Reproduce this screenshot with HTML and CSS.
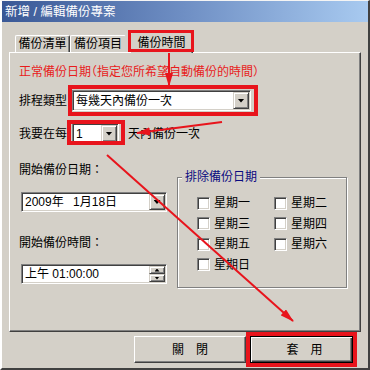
FILE: index.html
```html
<!DOCTYPE html>
<html lang="zh-Hant">
<head>
    <meta charset="UTF-8">
    <meta name="viewport" content="width=device-width, initial-scale=1.0">
    <title>新增 / 編輯備份專案</title>
    <link rel="stylesheet" href="styles.css">
</head>
<body>
    <div class="window">
        <div class="titlebar">新增 / 編輯備份專案</div>

        <div class="content">
            <div class="tabs">
                <div class="tab tab-list">備份清單</div>
                <div class="tab tab-items">備份項目</div>
                <div class="tab tab-active mark">備份時間</div>
            </div>

            <div class="panel">
                <p class="heading">正常備份日期（指定您所希望自動備份的時間）</p>

                <div class="row row-type">
                    <span class="label">排程類型</span>
                    <div class="field combo combo-type mark">
                        <span class="field-text">每幾天內備份一次</span>
                        <span class="drop"></span>
                    </div>
                </div>

                <div class="row row-every">
                    <span class="label">我要在每</span>
                    <div class="field combo combo-days mark">
                        <span class="field-text">1</span>
                        <span class="drop"></span>
                    </div>
                    <span class="suffix">天內備份一次</span>
                </div>

                <div class="lower">
                    <div class="start-col">
                        <div class="label">開始備份日期：</div>
                        <div class="field combo date-box">
                            <span class="field-text">2009年&ensp;&nbsp;1月18日</span>
                            <span class="drop"></span>
                        </div>
                        <div class="label label-time">開始備份時間：</div>
                        <div class="field time-box">
                            <span class="field-text">上午 01:00:00</span>
                            <span class="spin">
                                <span class="spin-btn spin-up"></span>
                                <span class="spin-btn spin-down"></span>
                            </span>
                        </div>
                    </div>

                    <fieldset class="exclude">
                        <legend>排除備份日期</legend>
                        <div class="days">
                            <label class="day"><span class="check"></span>星期一</label>
                            <label class="day"><span class="check"></span>星期二</label>
                            <label class="day"><span class="check"></span>星期三</label>
                            <label class="day"><span class="check"></span>星期四</label>
                            <label class="day"><span class="check"></span>星期五</label>
                            <label class="day"><span class="check"></span>星期六</label>
                            <label class="day"><span class="check"></span>星期日</label>
                        </div>
                    </fieldset>
                </div>
            </div>

            <div class="buttons">
                <button class="btn btn-close">關　閉</button>
                <button class="btn btn-apply mark">套　用</button>
            </div>
        </div>
    </div>

    <!-- annotation arrows drawn over the dialog -->
    <svg class="arrows" width="370" height="370" viewBox="0 0 370 370">
        <defs>
            <marker id="head" markerWidth="14" markerHeight="8" refX="13" refY="4" orient="auto" markerUnits="userSpaceOnUse">
                <path d="M0,0 L14,4 L0,8 z" fill="#e8141c"/>
            </marker>
        </defs>
        <line x1="169" y1="53" x2="169" y2="86" marker-end="url(#head)"/>
        <line x1="222" y1="122" x2="137" y2="133" marker-end="url(#head)"/>
        <line x1="107" y1="155" x2="293" y2="321" marker-end="url(#head)"/>
    </svg>
</body>
</html>
```

FILE: styles.css
```css
/* Dialog in Windows classic look */
body {
    margin: 0;
    font-family: "Liberation Sans", "Noto Sans CJK TC", sans-serif;
    font-size: 12px;
    line-height: 16px;
    color: #000;
}

.window {
    width: 370px;
    height: 370px;
    box-sizing: border-box;
    background-color: #d4d0c8;
    border-style: solid;
    border-width: 1px 2px 2px 2px;
    border-color: #f4f4f4 #404040 #404040 #ffffff;
}

.titlebar {
    height: 21px;
    padding-left: 3px;
    display: flex;
    align-items: center;
    color: #fff;
    font-size: 12.5px;
    background: linear-gradient(to right, #3a5896, #6f8fc4 50%, #a8caf0);
}

.content {
    padding: 10px 7px 0 7px;
}

/* tabs */
.tabs {
    display: flex;
    align-items: flex-end;
    height: 20px;
}

.tab {
    position: relative;
    box-sizing: border-box;
    height: 17px;
    text-align: center;
    line-height: 16px;
    border-top: 1px solid #fff;
    border-left: 1px solid #fff;
    border-right: 1px solid #404040;
    border-radius: 2px 2px 0 0;
    box-shadow: inset -1px 0 0 #808080;
}

.tab-list {
    width: 55px;
    margin-left: 6px;
}

.tab-items {
    width: 56px;
    border-right-color: #d4d0c8;
    box-shadow: none;
}

.tab-active {
    width: 63px;
    height: 21px;
    margin-left: 4px;
    margin-bottom: -1px;
    line-height: 20px;
    padding-bottom: 1px;
    background-color: #d4d0c8;
    z-index: 1;
}

/* red annotation frames */
.mark::after {
    content: "";
    position: absolute;
    border: 4px solid #e8141c;
    pointer-events: none;
}

.tab-active::after {
    top: -3px;
    left: -3px;
    right: -2px;
    bottom: 1px;
    border-width: 3px;
}

.combo-type::after {
    top: -6px;
    left: -5px;
    right: -8px;
    bottom: -6px;
}

.combo-days::after {
    top: -4px;
    left: -6px;
    right: -7px;
    bottom: -2px;
}

.btn-apply::after {
    top: -5px;
    left: -5px;
    right: -5px;
    bottom: -5px;
}

/* main panel */
.panel {
    box-sizing: border-box;
    height: 280px;
    padding: 11px 9px 0 9px;
    border-top: 1px solid #fff;
    border-left: 1px solid #fff;
    border-right: 1px solid #404040;
    border-bottom: 1px solid #404040;
    box-shadow: inset -1px -1px 0 #808080;
}

.heading {
    margin: 0;
    color: #e81c1c;
    font-feature-settings: "halt";
}

.row {
    display: flex;
    align-items: center;
}

.row-type {
    margin-top: 10px;
}

.row-every {
    margin-top: 12px;
}

.label {
    white-space: nowrap;
}

.row .field {
    margin-left: 5px;
}

.suffix {
    margin-left: 9px;
}

/* sunken text fields */
.field {
    position: relative;
    box-sizing: border-box;
    height: 21px;
    display: flex;
    align-items: center;
    background-color: #fff;
    border: 1px solid;
    border-color: #808080 #fff #fff #808080;
    box-shadow: inset 1px 1px 0 #404040, inset -1px -1px 0 #d4d0c8;
}

.field-text {
    flex: 1;
    padding-left: 3px;
    white-space: nowrap;
}

.combo-type {
    width: 179px;
}

.combo-days {
    width: 47px;
}

.drop {
    box-sizing: border-box;
    width: 16px;
    height: 17px;
    margin-right: 1px;
    display: flex;
    align-items: center;
    justify-content: center;
    background-color: #d4d0c8;
    border: 1px solid;
    border-color: #d4d0c8 #404040 #404040 #d4d0c8;
    box-shadow: inset 1px 1px 0 #fff, inset -1px -1px 0 #808080;
}

.drop::after {
    content: "";
    width: 7px;
    height: 4px;
    background-color: #000;
    clip-path: polygon(0 0, 100% 0, 50% 100%);
}

/* lower part: start date/time and excluded days */
.lower {
    display: flex;
    align-items: flex-start;
    margin-top: 18px;
}

.start-col {
    width: 148px;
}

.date-box,
.time-box {
    width: 146px;
    height: 20px;
    margin-left: 2px;
}

.date-box {
    margin-top: 14px;
}

.date-box .drop {
    height: 16px;
}

.label-time {
    margin-top: 23px;
}

.time-box {
    margin-top: 13px;
}

.spin {
    display: flex;
    flex-direction: column;
    margin-right: 1px;
}

.spin-btn {
    box-sizing: border-box;
    width: 16px;
    height: 8px;
    display: flex;
    align-items: center;
    justify-content: center;
    background-color: #d4d0c8;
    border: 1px solid;
    border-color: #d4d0c8 #404040 #404040 #d4d0c8;
    box-shadow: inset 1px 1px 0 #fff, inset -1px -1px 0 #808080;
}

.spin-btn::after {
    content: "";
    width: 5px;
    height: 3px;
    background-color: #000;
}

.spin-up::after {
    clip-path: polygon(50% 0, 100% 100%, 0 100%);
}

.spin-down::after {
    clip-path: polygon(0 0, 100% 0, 50% 100%);
}

.exclude {
    box-sizing: border-box;
    width: 170px;
    min-width: 0;
    margin: 7px 0 0 10px;
    padding: 8px 4px 12px 4px;
    border: 1px solid #808080;
    box-shadow: inset 1px 1px 0 #fff, 1px 1px 0 #fff;
}

.exclude legend {
    padding: 0 3px;
    line-height: 16px;
    color: #0a0a80;
    background-color: #d4d0c8;
}

.days {
    display: grid;
    grid-template-columns: 77px 77px;
    grid-auto-rows: 20.5px;
    margin-left: 15px;
}

.day {
    display: flex;
    align-items: center;
    gap: 4px;
    white-space: nowrap;
}

.check {
    box-sizing: border-box;
    width: 13px;
    height: 13px;
    background-color: #fff;
    border: 1px solid;
    border-color: #808080 #fff #fff #808080;
    box-shadow: inset 1px 1px 0 #404040, inset -1px -1px 0 #d4d0c8;
}

/* dialog buttons */
.buttons {
    display: flex;
    justify-content: flex-end;
    gap: 4px;
    margin-top: 4px;
    padding-right: 8px;
}

.btn {
    position: relative;
    box-sizing: border-box;
    height: 27px;
    padding: 0;
    font: inherit;
    color: #000;
    background-color: #d4d0c8;
    border: 1px solid;
    border-color: #fff #404040 #404040 #fff;
    box-shadow: inset -1px -1px 0 #808080;
}

.btn-close {
    width: 112px;
}

.btn-apply {
    width: 103px;
    padding-left: 6px;
    border-color: #000;
    box-shadow: inset 1px 1px 0 #fff, inset -1px -1px 0 #404040, inset -2px -2px 0 #808080;
}

.arrows {
    position: absolute;
    top: 0;
    left: 0;
    pointer-events: none;
}

.arrows line {
    stroke: #e8141c;
    stroke-width: 2;
}
```
